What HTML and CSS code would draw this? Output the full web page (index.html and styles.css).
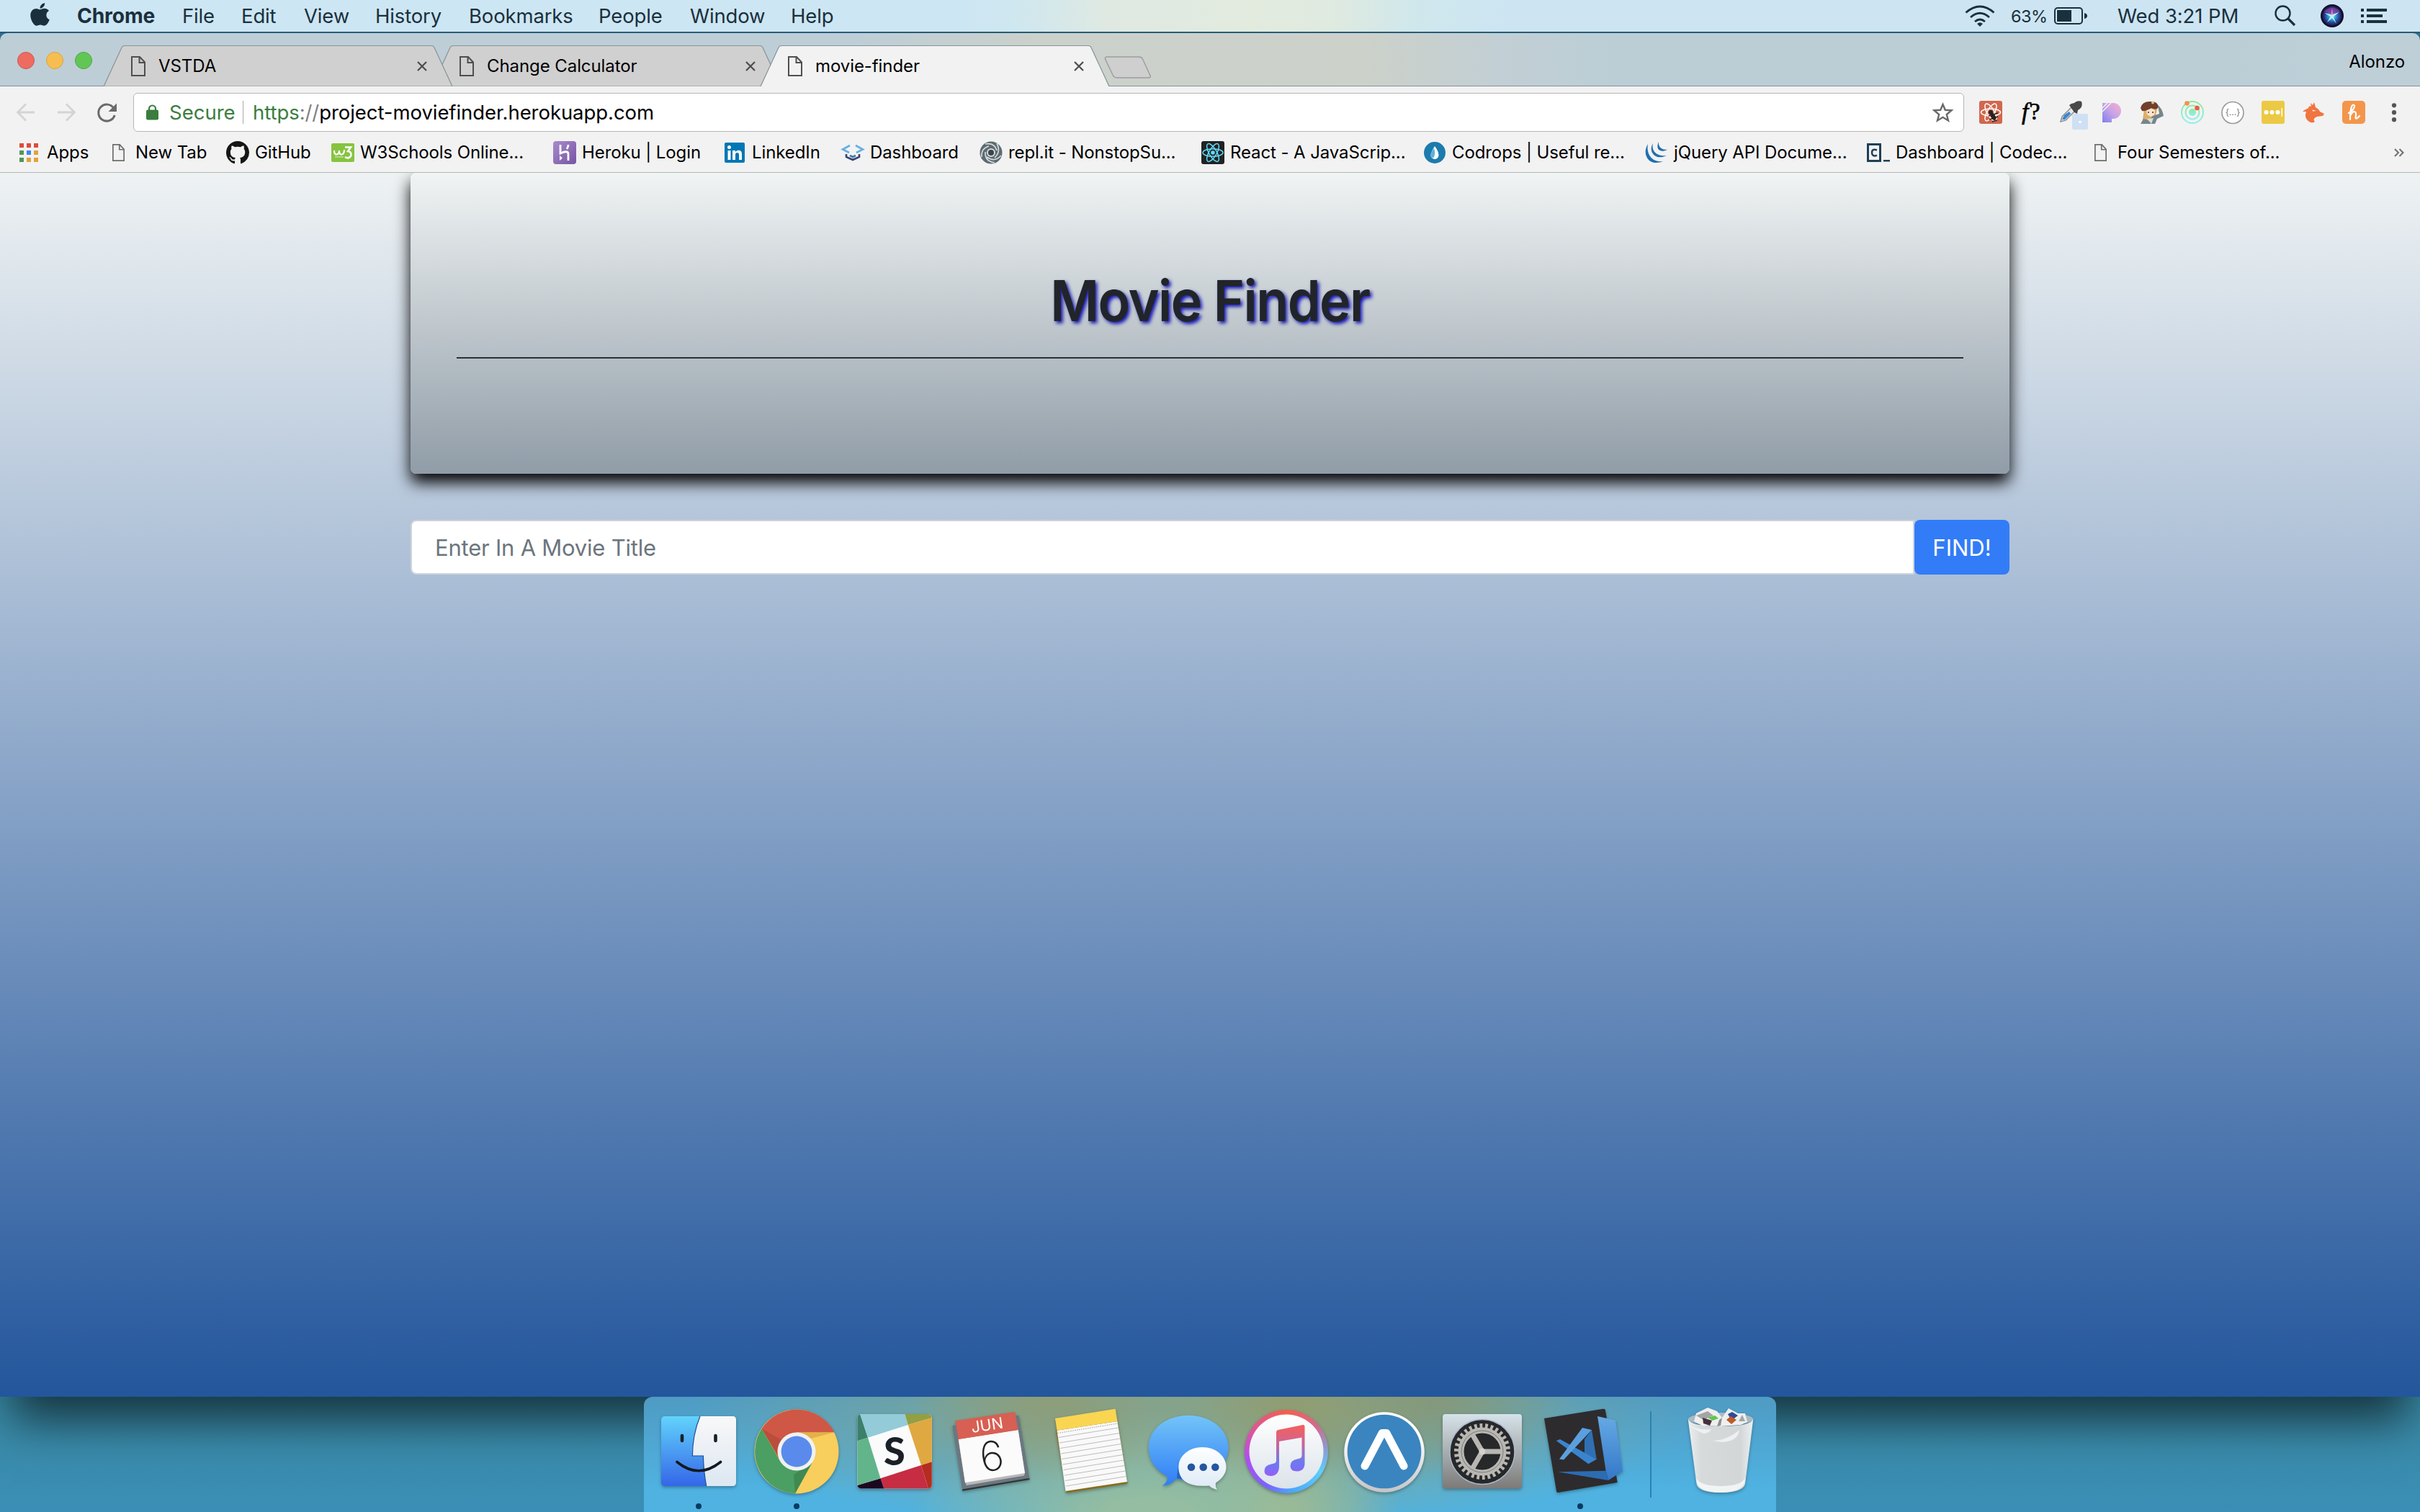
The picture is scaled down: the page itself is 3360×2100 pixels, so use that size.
FILE: index.html
```html
<!DOCTYPE html>
<html lang="en">
<head>
<meta charset="utf-8">
<title>movie-finder</title>
<link rel="stylesheet" href="styles.css">
</head>
<body>
<svg class="defs" width="0" height="0" aria-hidden="true">
  <defs>
    <symbol id="page" viewBox="0 0 20 28"><path d="M1 1H12L19 8.5V27H1Z M11.5 1V9H19" fill="none" stroke="currentColor" stroke-width="2"/></symbol>
    <symbol id="close" viewBox="0 0 14 14"><path d="M1 1L13 13M13 1L1 13" stroke="#4c4c4c" stroke-width="2.2"/></symbol>
    <symbol id="tab" viewBox="0 0 484 57"><path d="M0 57L25 3Q26 .5 29 .5H455Q458 .5 459 3L484 57Z"/></symbol>
  </defs>
</svg>

<header class="menubar">
  <nav class="menus">
    <svg class="apple" viewBox="0 28 384 456" preserveAspectRatio="none"><path fill="#1a303d" d="M318.7 268.7c-.2-36.7 16.4-64.4 50-84.8-18.8-26.9-47.2-41.7-84.7-44.6-35.5-2.8-74.3 20.7-88.5 20.7-15 0-49.4-19.7-76.4-19.7C63.3 141.2 4 184.8 4 273.5q0 39.3 14.4 81.2c12.8 36.7 59 126.7 107.2 125.2 25.2-.6 43-17.9 75.8-17.9 31.8 0 48.3 17.9 76.4 17.9 48.6-.7 90.4-82.5 102.6-119.3-65.2-30.7-61.7-90-61.7-91.9zm-56.6-164.2c27.3-32.4 24.8-61.9 24-72.5-24.1 1.4-52 16.4-67.9 34.9-17.5 19.8-27.8 44.3-25.6 71.9 26.1 2 49.9-11.4 69.5-34.3z"/></svg>
    <b class="t">Chrome</b><span class="t">File</span><span class="t">Edit</span><span class="t">View</span><span class="t">History</span><span class="t">Bookmarks</span><span class="t">People</span><span class="t">Window</span><span class="t">Help</span>
  </nav>
  <div class="status">
    <svg width="42" height="30" viewBox="0 0 42 30" fill="none" stroke="#1a303d" stroke-width="2.8"><path d="M1.5 10.5Q21-6.500 40.500 10.500M8 17Q21 5.500 34 17M14 23Q21 17 28 23"/><path d="M17 26Q21 22.500 25 26L21 30Z" fill="#1a303d" stroke="none"/></svg>
    <span class="t small">63%</span>
    <svg width="48" height="26" viewBox="0 0 48 26"><rect x="1" y="2" width="38" height="22" rx="4" fill="none" stroke="#1a303d" stroke-width="2"/><rect x="4" y="5" width="20" height="16" fill="#1a303d"/><path d="M42 9Q46 10 46 13T42 17Z" fill="#1a303d"/></svg>
    <span class="t">Wed 3:21 PM</span>
    <svg width="30" height="30" viewBox="0 0 30 30" fill="none" stroke="#1a303d"><circle cx="11.500" cy="11.500" r="10" stroke-width="2.400"/><path d="M18.500 18.500L28 28" stroke-width="3.200"/></svg>
    <svg width="32" height="32" viewBox="0 0 32 32"><defs><radialGradient id="siri"><stop offset="0" stop-color="#d8fbff"/><stop offset=".3" stop-color="#31b5d8"/><stop offset=".65" stop-color="#2a4ea6"/><stop offset="1" stop-color="#1b1236"/></radialGradient></defs><circle cx="16" cy="16" r="16" fill="#0d0f2b"/><circle cx="16" cy="16" r="14" fill="url(#siri)"/><path d="M5 10Q16-1 27 10L17 15Z" fill="#8a3a9c" opacity=".75"/><path d="M5 12L15 14.500L26 11L17.500 17L22 27L16 19L9 25L14 17Z" fill="#bff2fa"/><path d="M17 15L16 5L14.500 15Z" fill="#f08fd8"/></svg>
    <svg width="36" height="20" viewBox="0 0 36 20" fill="#1a303d"><path d="M0 0H4V4H0ZM8 0H36V4H8ZM0 8H4V12H0ZM8 8H30V12H8ZM0 16H4V20H0ZM8 16H36V20H8Z"/></svg>
  </div>
</header>

<main class="window">
  <div class="strip">
    <div class="lights"><i class="red"></i><i class="amber"></i><i class="green"></i></div>
    <div class="tabs">
      <div class="tab first"><svg class="shape"><use href="#tab"/></svg><svg class="doc"><use href="#page"/></svg><span class="t">VSTDA</span><svg class="x"><use href="#close"/></svg></div>
      <div class="tab"><svg class="shape"><use href="#tab"/></svg><svg class="doc"><use href="#page"/></svg><span class="t">Change Calculator</span><svg class="x"><use href="#close"/></svg></div>
      <div class="tab active"><svg class="shape"><use href="#tab"/></svg><svg class="doc"><use href="#page"/></svg><span class="t">movie-finder</span><svg class="x"><use href="#close"/></svg></div>
    </div>
    <svg class="newtab" viewBox="0 0 66 32"><path d="M4 1H48Q52 1 53.500 4L64 27Q65 30 62 30H18Q14 30 12.500 27L1.500 4Q1 1 4 1Z" fill="#cfcfcf" stroke="#9b9f9f" stroke-width="1.500"/></svg>
    <span class="profile t">Alonzo</span>
  </div>

  <div class="toolbar">
    <svg class="nav" width="26" height="26" viewBox="0 0 26 26"><path d="M25 13H2M13 1.500L1.500 13L13 24.500" fill="none" stroke="#d4d4d4" stroke-width="2.800"/></svg>
    <svg class="nav fwd" width="26" height="26" viewBox="0 0 26 26"><path d="M1 13H24M13 1.500L24.500 13L13 24.500" fill="none" stroke="#d4d4d4" stroke-width="2.800"/></svg>
    <svg class="nav reload" width="28" height="27" viewBox="0 0 28 27"><path d="M23 7.500A11.500 11.500 0 1 0 24.200 17" fill="none" stroke="#6a6a6a" stroke-width="3"/><path d="M27 .5V12H15.500Z" fill="#6a6a6a"/></svg>
    <div class="omnibox">
      <svg width="17" height="22" viewBox="0 0 17 22"><path d="M4 9V6a4.500 4.500 0 0 1 9 0V9" fill="none" stroke="#3a7d3e" stroke-width="2.200"/><rect y="7.500" width="17" height="14" rx="2" fill="#3a7d3e"/></svg>
      <span class="secure t">Secure</span><i class="rule"></i>
      <span class="url t"><span class="scheme">https</span><span class="slashes">://</span>project-moviefinder.herokuapp.com</span>
      <svg class="star" width="29" height="29" viewBox="0 0 29 29"><path d="M14.500 3L17.800 10.800L26.500 11.300L19.800 17L22 25.500L14.500 20.800L7 25.500L9.200 17L2.500 11.300L11.200 10.800Z" fill="none" stroke="#686868" stroke-width="2.400"/></svg>
    </div>
    <div class="extensions">
      <svg viewBox="0 0 32 32"><rect width="32" height="32" rx="3" fill="#d2674e"/><g fill="none" stroke="#fff" stroke-width="1.500"><ellipse cx="16" cy="16" rx="13.500" ry="5"/><ellipse cx="16" cy="16" rx="13.500" ry="5" transform="rotate(60 16 16)"/><ellipse cx="16" cy="16" rx="13.500" ry="5" transform="rotate(120 16 16)"/></g><g stroke="#2a211e" stroke-width="1.400"><circle cx="16" cy="16" r="2.300" fill="#2a211e"/><ellipse cx="19.500" cy="22" rx="2.400" ry="4.500" transform="rotate(-30 19.500 22)" fill="#2a211e"/><path d="M13 21L26 17M14 26L26 22M18 29L25 27"/></g></svg>
      <span class="fx"><i>f</i>?</span>
      <svg class="picker" viewBox="0 0 40 40"><path d="M1 29L3 22L16 9L21 14L8 27Z" fill="#e4e8ec" stroke="#8d9094" stroke-width="1.500"/><path d="M3 26L6 20L13 15L15 18L7 26Z" fill="#3d86cf"/><path d="M13 6L16 4L20 3Q24-1 30 1Q32 7 28 11L25 13L24 18L20 16Z" fill="#484848"/><rect x="17" y="18" width="22" height="22" rx="2" fill="#cfe0f5"/><circle cx="28" cy="29.500" r="1.800" fill="#fff"/></svg>
      <svg viewBox="0 0 32 32"><defs><linearGradient id="pg" x1="1" y1="0" x2="0" y2="1"><stop offset="0" stop-color="#f9aed0"/><stop offset=".5" stop-color="#c6a3e6"/><stop offset="1" stop-color="#7c80ee"/></linearGradient></defs><path d="M3 3H18A11 11 0 0 1 18 25H16V30H3Z" fill="url(#pg)"/><path d="M3 10L10 3M3 15L15 3" stroke="#f2f2f2" stroke-width="1.500"/></svg>
      <svg viewBox="0 0 32 32"><path d="M5 12L3 26L10 30L20 24L24 8Z" fill="#dcae68"/><path d="M8 13Q15 9 20 13L19 20L14 22L9 19Z" fill="#fbe3cc"/><path d="M10 16H12M16 16H18" stroke="#3d3026" stroke-width="1.500"/><path d="M0 10Q2 1 13 1Q24 0 25 9Q21 14 15 10Q7 15 2 14Z" fill="#71402c"/><circle cx="17" cy="2.500" r="2" fill="#d9c191"/><path d="M24 6Q30 10 32 21L23 25L20 32H0L4 25L12 27L17 21L26 18Z" fill="#76858a"/><path d="M9 25L15 32L18 24Z" fill="#d9dddd"/></svg>
      <svg viewBox="0 0 32 32"><defs><linearGradient id="rg" x1="0" y1="0" x2="0" y2="1"><stop offset="0" stop-color="#8beb9f"/><stop offset="1" stop-color="#93efe9"/></linearGradient></defs><g fill="none" stroke="url(#rg)" stroke-width="2"><circle cx="16" cy="16" r="15"/><circle cx="16" cy="16" r="9.500"/></g><circle cx="16" cy="16" r="5" fill="url(#rg)"/><circle cx="8.500" cy="3.500" r="3.300" fill="#f0934b"/><circle cx="22.500" cy="10" r="3.300" fill="#e4603f"/></svg>
      <svg viewBox="0 0 32 32"><circle cx="16" cy="16.500" r="15" fill="#fff" stroke="#999" stroke-width="1.600"/><text x="16" y="20" text-anchor="middle" font-family="Inter" font-size="12" fill="#777">{...}</text></svg>
      <svg viewBox="0 0 32 32"><rect width="32" height="32" rx="3" fill="#ecc944"/><g fill="#fff"><circle cx="6.500" cy="16" r="3"/><circle cx="14.500" cy="16" r="3"/><circle cx="22.500" cy="16" r="3"/><path d="M27.500 10H29V22H27.500Z"/></g></svg>
      <svg viewBox="0 0 32 32"><path d="M1 15Q3 13 9 10Q10 6 13 8L12 3L15 6L17 2L19 9Q24 12 25 15L31 18L29 21L21 22Q14 25 18 29Q16 31 12 30Q4 26 5 19L6 15Z" fill="#f0753f"/><path d="M14.500 12.500L20 14L15 14.500Z" fill="#fff"/></svg>
      <svg viewBox="0 0 32 32"><rect width="32" height="32" rx="5" fill="#f3964b"/><path d="M9 17Q17 12 17 7Q16 4 13.500 7Q11 12 11 26M11 21Q15 13 18 15.500Q20 18 18.500 23Q19 27 24 21" fill="none" stroke="#fff" stroke-width="2.200" stroke-linecap="round"/></svg>
      <svg viewBox="0 0 32 32" fill="#555"><circle cx="16" cy="6.300" r="3.100"/><circle cx="16" cy="16.200" r="3.100"/><circle cx="16" cy="26.200" r="3.100"/></svg>
    </div>
  </div>

  <nav class="bookmarks">
    <a class="apps"><svg viewBox="0 0 26 26"><path d="M0 0H6V6H0ZM10 0H16V6H10ZM20 0H26V6H20Z" fill="#e04a3c"/><path d="M0 10H6V16H0ZM0 20H6V26H0Z" fill="#519657"/><path d="M10 10H16V16H10Z" fill="#4285f0"/><path d="M20 10H26V16H20ZM10 20H16V26H10ZM20 20H26V26H20Z" fill="#e3a239"/></svg><span class="t">Apps</span></a>
    <a><svg class="leaf"><use href="#page"/></svg><span class="t">New Tab</span></a>
    <a><svg viewBox="0 0 16 16"><path fill="#161616" d="M8 0C3.580 0 0 3.580 0 8c0 3.540 2.290 6.530 5.470 7.590.4.070.55-.17.55-.38 0-.19-.01-.82-.01-1.490-2.010.37-2.530-.49-2.690-.94-.09-.23-.48-.94-.82-1.130-.28-.15-.68-.52-.01-.53.63-.01 1.080.58 1.230.82.72 1.210 1.870.87 2.330.66.07-.52.28-.87.51-1.070-1.780-.2-3.640-.89-3.640-3.950 0-.87.31-1.590.82-2.150-.08-.2-.36-1.020.08-2.120 0 0 .67-.21 2.200.82.64-.18 1.320-.27 2-.27s1.360.09 2 .27c1.530-1.040 2.200-.82 2.200-.82.44 1.100.16 1.920.08 2.120.51.56.82 1.270.82 2.150 0 3.070-1.870 3.750-3.650 3.950.29.25.54.73.54 1.480 0 1.070-.01 1.930-.01 2.200 0 .21.15.46.55.38A8.010 8.010 0 0016 8c0-4.420-3.580-8-8-8z"/></svg><span class="t">GitHub</span></a>
    <a><svg viewBox="0 0 32 32"><rect y="3" width="32" height="26" rx="2" fill="#86c440"/><path d="M4 13Q4 19 7.500 18.500Q11 18 11 13Q11 19 14.500 18.500Q18 18 18 12" fill="none" stroke="#fff" stroke-width="2.200"/><path d="M19 8.500H27L23 14Q29 15 27 21Q24 25 19 22" fill="none" stroke="#fff" stroke-width="2.600"/><path d="M5 22H17" stroke="#d5edbb" stroke-width="1.600" stroke-dasharray="1.500 .5"/></svg><span class="t">W3Schools Online...</span></a>
    <a><svg viewBox="0 0 32 32"><defs><linearGradient id="hk" x2="1" y2="1"><stop stop-color="#a98bcc"/><stop offset="1" stop-color="#7654a3"/></linearGradient></defs><rect width="32" height="32" rx="4" fill="url(#hk)"/><path d="M10 5V17Q21 12 21 18V27M21 5Q21 8 19 11" fill="none" stroke="#fff" stroke-width="2.800"/><path d="M9 20L13 23.500L9 27Z" fill="#fff"/></svg><span class="t">Heroku | Login</span></a>
    <a><svg viewBox="0 0 32 32"><rect x="2" y="2" width="28" height="28" rx="2" fill="#0077b5"/><g fill="#fff"><circle cx="8.500" cy="8.500" r="2.500"/><path d="M6.500 13H10.500V26H6.500ZM13 13H17V15Q19 12.500 22 12.800Q26 13 26 18V26H22V19Q22 16 19.500 16Q17 16 17 19V26H13Z"/></g></svg><span class="t">LinkedIn</span></a>
    <a><svg viewBox="0 0 32 32" fill="none" stroke-width="2.600"><path d="M12 6L2 11.500L11 16M20 6L30 11.500L21 16" stroke="#65aee4"/><path d="M7 18V22L16 26L25 22V18" stroke="#36446b"/><path d="M12 20L16 22L20 20" stroke="#3b78b5"/></svg><span class="t">Dashboard</span></a>
    <a><svg viewBox="0 0 32 32"><circle cx="16" cy="16" r="15.500" fill="#5d6b71"/><g fill="none" stroke="#d4dadd" stroke-width="1.700"><path d="M8 4Q21 2 24 13M24 3Q30 15 21 23M30 20Q21 30 10 22M21 30Q7 28 8 15M3 22Q2 10 13 7"/></g><circle cx="16" cy="16" r="6" fill="#d4dadd"/><circle cx="16" cy="16" r="4" fill="#3c4549"/></svg><span class="t">repl.it - NonstopSu...</span></a>
    <a><svg viewBox="0 0 32 32"><rect width="32" height="32" rx="3" fill="#222"/><g fill="none" stroke="#61dafb" stroke-width="1.500"><ellipse cx="16" cy="16" rx="14" ry="5.300"/><ellipse cx="16" cy="16" rx="14" ry="5.300" transform="rotate(60 16 16)"/><ellipse cx="16" cy="16" rx="14" ry="5.300" transform="rotate(120 16 16)"/></g><circle cx="16" cy="16" r="2.800" fill="#61dafb"/></svg><span class="t">React - A JavaScrip...</span></a>
    <a><svg viewBox="0 0 32 32"><circle cx="16" cy="16" r="15" fill="#1c7bad"/><path d="M16 7Q22 15 21.500 20A5.500 5.500 0 0 1 10.500 19Q11 15 16 7Z" fill="#fff"/><path d="M15 10Q18 18 14 23.500Q9 22 10.500 18Q11 15 15 10Z" fill="#5fb0da"/></svg><span class="t">Codrops | Useful re...</span></a>
    <a><svg viewBox="0 0 32 32" fill="#1f6fb0"><path d="M4 4C-5 18 5 36 25 28C12 30 1 20 4 4Z"/><path d="M11 3C4 14 14 28 30 20C19 22 8 15 11 3Z"/><path d="M19 1C14 11 21 17 31 12C24 12 18 9 19 1Z"/></svg><span class="t">jQuery API Docume...</span></a>
    <a><svg viewBox="0 0 32 32"><rect x="1.500" y="4.500" width="17" height="23" fill="none" stroke="#204056" stroke-width="3"/><path d="M14 12.500Q7 10 7 16T14 19.800" fill="none" stroke="#204056" stroke-width="2.500"/><path d="M23 26H32V28.500H23Z" fill="#204056"/></svg><span class="t">Dashboard | Codec...</span></a>
    <a><svg class="leaf"><use href="#page"/></svg><span class="t">Four Semesters of...</span></a>
    <svg class="more" width="14" height="12" viewBox="0 0 14 12"><path d="M1 1L6 6L1 11M7.500 1L12.500 6L7.500 11" fill="none" stroke="#6e6e6e" stroke-width="2"/></svg>
  </nav>

  <section class="page">
    <div class="jumbotron">
      <h1><span class="t">Movie Finder</span></h1>
      <hr>
    </div>
    <form class="search">
      <div class="field"><span class="t">Enter In A Movie Title</span></div>
      <button type="button"><span class="t">FIND!</span></button>
    </form>
  </section>
</main>

<footer class="desktop">
  <div class="dock">
    <div class="app on"><svg viewBox="0 0 128 128"><defs><linearGradient id="fb" x2="0" y2="1"><stop stop-color="#62d3fb"/><stop offset="1" stop-color="#3466e8"/></linearGradient><linearGradient id="fw" x2="0" y2="1"><stop stop-color="#f8f8f8"/><stop offset="1" stop-color="#dce7f2"/></linearGradient></defs><rect x="12" y="15" width="104" height="97" rx="5" fill="url(#fb)"/><path d="M66 15C59 32 55.500 50 55.400 70H70.400Q71 92 74.700 112H111Q116 112 116 107V20Q116 15 111 15Z" fill="url(#fw)"/><path d="M66 15C59 32 55.500 50 55.400 70H70.400Q71 92 74.700 112" fill="none" stroke="#1b4f96" stroke-width="1.200"/><path d="M41 42V49M87.500 42V49" stroke="#14212b" stroke-width="4.600" stroke-linecap="round"/><path d="M34 78.500Q64 103 94.500 78.500" fill="none" stroke="#14181f" stroke-width="3.600" stroke-linecap="round"/></svg></div>
    <div class="app on"><svg viewBox="0 0 128 128"><circle cx="64" cy="64" r="58.500" fill="#f8ce5c"/><path d="M15.500 32.300A58.500 58.500 0 0 1 116.600 37.300H64L40 74Z" fill="#cf5746"/><path d="M15.500 32.300A58.500 58.500 0 0 0 62 122.400L86 79L64 90L41 77Z" fill="#4b9f62"/><path d="M64 37.300H116.600L80 47Z" fill="#c98f35" opacity=".45"/><path d="M85 80L62 122L60 96Z" fill="#2c6a3d" opacity=".4"/><path d="M15.500 32.300L41 77L44 48Z" fill="#8f382b" opacity=".3"/><circle cx="64" cy="64" r="26.500" fill="#f1f1f1"/><circle cx="64" cy="64" r="21.400" fill="#5a8bec"/></svg></div>
    <div class="app"><svg viewBox="0 0 128 128"><defs><clipPath id="sk"><rect x="12.400" y="12" width="103.400" height="103.500" rx="5"/></clipPath></defs><g clip-path="url(#sk)"><rect width="128" height="128" fill="#fbfbfc"/><path d="M12 12H16.300L27 44.700L12 49.500Z" fill="#3c7f6a"/><path d="M16 12H78.300L82.700 27L27 44.700Z" fill="#94cbd8"/><path d="M78.300 12H116V17.300L82.700 27Z" fill="#92a043"/><path d="M82.700 27L116 17.300V78.300L101 83Z" fill="#e0a840"/><path d="M101 83L116 78.300V116H111Z" fill="#b42d1e"/><path d="M44.500 101.300L101 83L111 116H49.500Z" fill="#c62d42"/><path d="M12 111L44.500 101.300L49.500 116H12Z" fill="#1c0720"/><path d="M12 49.500L27 44.700L44.500 101.300L12 111Z" fill="#62b48b"/></g><text x="64" y="83" text-anchor="middle" font-family="Lato" font-weight="900" font-size="54" fill="#1b1f26">S</text></svg></div>
    <div class="app"><svg viewBox="0 0 128 128"><path d="M8.500 28L100.600 13.700L115.600 103L22.400 118.700Z" fill="#6b7781"/><path d="M22.400 118.700L115.600 103L115 101L22 116.500Z" fill="#333"/><path d="M16.700 47L99.600 34L109 94L108 97.500L28 111L26 107Z" fill="#b8b8b8"/><path d="M16.700 47L99.600 34L109 94L26 107.300Z" fill="#fbfbfb"/><path d="M12.400 21.300L95 9L99.600 34L16.700 47Z" fill="#d85f53"/><g transform="rotate(-8.500 60 50)" text-anchor="middle" font-family="Inter" fill="#fff"><text x="60" y="34.500" font-size="21.500">JUN</text><text x="60" y="91" font-size="57" font-weight="200" fill="#222">6</text></g></svg></div>
    <div class="app"><svg viewBox="0 0 128 128"><path d="M16 34L101.500 21L115.500 108.500L30.500 121.500Z" fill="#8a6c1c"/><path d="M17.500 34.700L101.400 22L115 106L29.500 119Z" fill="#f9f9f9"/><path d="M15 18L98.600 4.700L101.400 22L17.500 34.700Z" fill="#f9d552"/><path d="M18.500 38.500L102 25" stroke="#999" stroke-dasharray="1.500 1.500"/><g stroke="#bcbcbc"><path d="M19.400 44.500L103 31M20.700 52L104.200 38.500M21.900 59.500L105.400 46M23.100 67L106.600 53.500M24.300 74.500L107.800 61M25.500 82L109 68.500M26.700 89.500L110.200 76M27.900 97L111.400 83.500M29 104.500L112.600 91M30 112L113.800 98.500"/></g></svg></div>
    <div class="app"><svg viewBox="0 0 128 128"><defs><linearGradient id="mb" x2="0" y2="1"><stop stop-color="#73c4f8"/><stop offset="1" stop-color="#2f7df6"/></linearGradient><linearGradient id="mw" x2="0" y2="1"><stop stop-color="#fff"/><stop offset="1" stop-color="#dce9f5"/></linearGradient></defs><path d="M64 13.700C95 13.700 119.500 33 119.500 58.500S95 104 64 104Q55 104 47 102Q39 111 28 112Q35 107 35 99Q8.600 84 8.600 58.500C8.600 33 33 13.700 64 13.700Z" fill="url(#mb)"/><path d="M50 75Q46 90 58 103L48 101Z" fill="#173f8c" opacity=".5"/><path d="M83.500 58C102 58 116.500 70 116.500 85.500Q116.500 98 102 107.500Q101 113 104 117Q96 115 93 111.500Q50.400 115 50.400 85.500C50.400 70 65 58 83.500 58Z" fill="url(#mw)"/><g fill="#25569f"><circle cx="68" cy="85.700" r="5.300"/><circle cx="84.700" cy="85.700" r="5.300"/><circle cx="101.300" cy="85.700" r="5.300"/></g></svg></div>
    <div class="app"><svg viewBox="0 0 128 128"><defs><linearGradient id="n" gradientUnits="userSpaceOnUse" x1="0" y1="30" x2="0" y2="100"><stop stop-color="#f2605f"/><stop offset=".3" stop-color="#cf6590"/><stop offset=".7" stop-color="#6a7bf0"/><stop offset="1" stop-color="#9a5af8"/></linearGradient><linearGradient id="iw" x2="0" y2="1"><stop stop-color="#fff"/><stop offset="1" stop-color="#dbe3ea"/></linearGradient></defs><foreignObject x="6" y="6" width="116" height="116"><div class="ring"></div></foreignObject><circle cx="64" cy="64" r="51.500" fill="url(#iw)"/><path d="M50 37Q50 34.500 52.500 34L87 27Q89.500 26.500 89.500 29.500V80Q89.500 91 79 91.500Q69.500 91.500 69.500 84Q69.500 76 79 74.500Q85.500 73.500 85.500 70V44.500L54 50V84Q54 97.500 42.500 98Q33.500 98 33.500 91Q33.500 83 43 81.500Q50 80.500 50 77Z" fill="url(#n)"/></svg></div>
    <div class="app"><svg viewBox="0 0 128 128"><defs><linearGradient id="aw" x2="0" y2="1"><stop offset=".3" stop-color="#fff"/><stop offset="1" stop-color="#c4c4c4"/></linearGradient></defs><circle cx="64" cy="65" r="55.800" fill="url(#aw)"/><circle cx="64" cy="64" r="51.300" fill="#3a85bf"/><path d="M37 84L61 38.500H67L91 84" fill="none" stroke="#fff" stroke-width="11" stroke-linecap="round" stroke-linejoin="round"/></svg></div>
    <div class="app"><svg viewBox="0 0 128 128"><defs><linearGradient id="sg" x2="0" y2="1"><stop stop-color="#d6e3ea"/><stop offset="1" stop-color="#7c7a78"/></linearGradient></defs><rect x="9" y="12" width="110" height="103.500" rx="4" fill="url(#sg)"/><circle cx="64" cy="64.500" r="45" fill="#27282a" stroke="#a9b9cb" stroke-width="1.500"/><g fill="none" stroke="#b9b7b3"><circle cx="64" cy="64" r="36" stroke-width="6" stroke-dasharray="3.800 3.740"/><circle cx="64" cy="64" r="29.500" stroke-width="8"/><path d="M64 64H92M64 64L50 39.800M64 64L50 88.200" stroke-width="7"/></g><circle cx="64" cy="64" r="29" fill="none" stroke="#7c7b78"/><circle cx="64" cy="64" r="4.500" fill="#d3d1ce"/></svg></div>
    <div class="app on"><svg viewBox="0 0 128 128"><defs><linearGradient id="vb" x2="0" y2="1"><stop stop-color="#65a9e4"/><stop offset="1" stop-color="#3477c8"/></linearGradient></defs><path d="M14 18L96 4.700Q98.500 4.500 99 7L115.700 107L33 121Q31.500 121 31 119Z" fill="#2d2b2d"/><path d="M80 34L86.800 74.700L70 66V47Z" fill="#2f70b4"/><path d="M30.700 49L36 47L86.800 74.700L75.400 81.300Z" fill="#3a84cf"/><path d="M67 31L80 34L41 75.500L35 74.500Z" fill="#5ba0de"/><path d="M88 15L113 20.700L123 91.300L103 104L99.600 90.700Z" fill="url(#vb)"/><path d="M32.500 92.300L99.600 90.700L103 104Z" fill="#2c6cb2"/></svg></div>
    <i class="divider"></i>
    <div class="app"><svg viewBox="0 0 128 128"><defs><linearGradient id="tr" x2="1" y2="0"><stop stop-color="#f4f5f5"/><stop offset=".2" stop-color="#dedede"/><stop offset=".8" stop-color="#dadada"/><stop offset="1" stop-color="#f5f5f5"/></linearGradient></defs><ellipse cx="64" cy="19" rx="45" ry="9" fill="#a9bac4"/><path d="M18.600 18Q21 29 64 29T109.400 18L98 109Q95 121 64 121T30.500 109Z" fill="url(#tr)" opacity=".96"/><path d="M27 22L30 11L46 3L59 8L66 17L75 4L88 11L98 11L101 23L92 27L64 29L38 28Z" fill="#efefef"/><path d="M30 14L46 8L54 14L40 20ZM94 13L98 22L89 22Z" fill="#a3a5a6"/><path d="M39 17L52 21L49 28L40 25Z" fill="#453238"/><path d="M46 17L56 14L61 18L53 21Z" fill="#5ec64e"/><path d="M74 12L80 9L88 14L79 21Z" fill="#2f4b92"/><path d="M72 20L78 15L86 20L79 26Z" fill="#bd5b2b"/><path d="M62 20L66 17L64 28L59 29Z" fill="#8d8f92"/><path d="M22 29Q38 35 52 33Q42 43 34 36ZM52 49Q72 49 90 34Q88 50 66 51Z" fill="#fff" opacity=".6"/><path d="M30 101Q36 112 64 112T98 101Q98 121 64 121T30 101Z" fill="#fff" opacity=".7"/></svg></div>
  </div>
</footer>
</body>
</html>
```
FILE: styles.css
```css
* { box-sizing: border-box; }
body {
  margin: 0;
  width: 3360px;
  height: 2100px;
  overflow: hidden;
  display: flex;
  flex-direction: column;
  background: linear-gradient(#2f6f94 0 60px, #38889f 1900px, #3b8eb6);
  font-family: Inter, "Liberation Sans", sans-serif;
  font-size: 24px;
  color: #000;
}
svg { display: block; flex: none; overflow: visible; }
.defs { position: absolute; }
.t { white-space: nowrap; }

/* macOS menu bar */
.menubar {
  position: relative;
  z-index: 1;
  height: 46px;
  border-bottom: 2px solid #265c79;
  display: flex;
  justify-content: space-between;
  background: linear-gradient(90deg, #cde6f3 0 1340px, #cfe7ef 1410px, #dfe9e2 1540px, #e3ebdf 1740px, #dfeae0 1850px, #cfe7ec 1970px, #cde5f2 2090px);
  color: #1a303d;
  font-size: 27.5px;
}
.menus, .status { display: grid; align-items: center; }
.menus { padding-left: 42px; grid-template-columns: 65px 146px 82px 87px 99px 130px 180px 127px 140px 80px; letter-spacing: -.15px; }
.menus b { font-size: 28.2px; }
.status { grid-template-columns: 64px 60px 88px 218px 64px 56px 82px; letter-spacing: -.1px; }
.apple { width: 27px; height: 32px; margin-top: -4px; }
.small { font-size: 23.5px; letter-spacing: -.5px; }

/* Browser window */
.window {
  position: relative;
  height: 1894px;
  flex: none;
  border-radius: 10px 10px 0 0;
  box-shadow: 0 48px 60px -16px rgba(0, 0, 0, .62);
}
.strip {
  height: 74px;
  display: flex;
  border-bottom: 1px solid #82929b;
  border-radius: 10px 10px 0 0;
  background: linear-gradient(90deg, #bdced7 0 1180px, #cbd1cb 1440px, #ccd1ca 1900px, #c2cfd4 2080px, #bbced6 2240px 3100px, #bfcfd8);
}
.lights { display: flex; gap: 16px; padding: 26px 0 0 24px; width: 144px; }
.lights i { width: 24px; height: 24px; border-radius: 50%; border: 1px solid #d0584e; background: #ed6b60; }
.lights .amber { background: #f6be50; border-color: #d9a440; }
.lights .green { background: #62c655; border-color: #4fa743; }
.tabs { display: flex; padding-top: 17px; letter-spacing: -.08px; }
.tab { position: relative; flex: none; width: 484px; height: 57px; margin-right: -28px; display: flex; align-items: center; padding: 0 35px 0 38px; }
.tab > * { position: relative; }
.tab .shape { position: absolute; left: 0; top: 0; width: 484px; height: 57px; fill: #d0d0d0; stroke: #87939a; stroke-width: 1.2px; }
.tab.first { z-index: 1; }
.tab.active { z-index: 2; margin-right: 0; }
.tab.active .shape { fill: #f2f2f2; }
.tab.active::after { content: ""; position: absolute; left: 1px; right: 1px; bottom: -1px; height: 2px; background: #f2f2f2; }
.tab .doc { width: 20px; height: 28px; margin-right: 18px; color: #4f4f4f; }
.tab .x { width: 14px; height: 14px; margin-left: auto; }
.newtab { width: 66px; height: 32px; margin: 32px 0 0 -7px; }
.profile { margin: 25px 21px 0 auto; letter-spacing: -.1px; }

.toolbar { height: 64px; display: flex; padding: 9px 20px 0 23px; background: #f2f2f2; }
.nav { margin-top: 14px; }
.fwd { margin-left: 30px; }
.reload { margin-left: 30px; }
.omnibox { width: 2542px; height: 54px; margin-left: 22px; display: flex; align-items: center; padding: 0 14px 0 17px; border: 1px solid #b6b6b6; border-radius: 6px; background: #fff; font-size: 27.5px; }
.secure { width: 102px; margin-left: 15px; color: #3a7d3e; }
.rule { width: 1px; height: 32px; margin-right: 13px; background: #a9a9a9; }
.url { letter-spacing: -.06px; }
.scheme { color: #3a7d3e; }
.slashes { color: #808080; }
.star { margin-left: auto; }
.extensions { display: flex; gap: 24px; margin: 11px 0 0 21px; }
.extensions svg, .fx { width: 32px; height: 32px; flex: none; }
.extensions .picker { width: 40px; height: 40px; margin-right: -8px; }
.fx { font: 34px/30px "Liberation Serif", serif; letter-spacing: 1px; white-space: nowrap; padding-left: 3px; -webkit-text-stroke: .6px #000; }

.bookmarks { height: 56px; display: grid; grid-template-columns: 121px 166px 146px 308px 236px 164px 192px 308px 308px 308px 308px 308px 308px auto; padding: 0 22px 0 27px; align-items: center; background: #f2f2f2; border-bottom: 1px solid #b6b6b6; letter-spacing: -.1px; }
.bookmarks a { display: flex; align-items: center; gap: 8px; }
.bookmarks a svg { width: 32px; height: 32px; }
.bookmarks .apps { gap: 12px; }
.bookmarks .apps svg { width: 26px; height: 26px; }
.bookmarks a .leaf { width: 17px; height: 24px; margin: 0 7px 0 8px; color: #6e6e6e; }
.more { justify-self: end; }

/* Web page */
.page { height: 1700px; padding: 0 570px; overflow: hidden; background: linear-gradient(#eef2f3, #23569c); }
.jumbotron { height: 418px; padding: 128px 64px 0; border-radius: 8px; background: linear-gradient(#f0f4f4, #909ca7); box-shadow: 0 12px 22px #000; text-align: center; }
h1 { margin: 0; font-size: 79px; line-height: 98px; font-weight: 600; color: #212529; text-shadow: 3px 3px 5px #1414b4; letter-spacing: -1.6px; transform: scaleX(.93); }
hr { height: 2px; margin: 30px 0 0; border: 0; background: #2b3036; }
.search { display: flex; margin-top: 64px; font-size: 31px; }
.field { flex: 1; height: 76px; padding: 0 32px; border: 2px solid #ced4da; border-radius: 8px 0 0 8px; display: flex; align-items: center; background: #fff; color: #6c757d; letter-spacing: -.22px; }
button { width: 132px; height: 76px; padding: 0; border: 0; border-radius: 8px; background: #327cf7; color: #fff; font: inherit; }

/* Desktop and dock */
.desktop { position: relative; height: 160px; display: flex; justify-content: center; }
.dock {
  width: 1572px;
  height: 160px;
  padding: 12px 8px 0;
  display: flex;
  border-radius: 12px 12px 0 0;
  background:
    radial-gradient(ellipse 200px 130px at 570px -10px, #8d9d78 10%, transparent),
    radial-gradient(ellipse 200px 120px at 900px 0, #909d72 10%, transparent),
    radial-gradient(ellipse 200px 110px at 1090px 0, #84997c 10%, transparent),
    radial-gradient(ellipse 330px 150px at 700px 170px, #94bda1 20%, transparent),
    radial-gradient(ellipse 170px 110px at 880px 160px, #9fb78c 10%, transparent),
    radial-gradient(ellipse 700px 160px at 760px 30px, #80a695 30%, transparent),
    linear-gradient(#4f9bc3, #4fb2e1 80%);
}
.app { position: relative; width: 136px; padding-left: 4px; }
.app svg { width: 128px; height: 128px; filter: drop-shadow(0 2px 2px rgba(0, 0, 0, .3)); }
.app.on::after { content: ""; position: absolute; left: 64px; top: 136px; width: 8px; height: 8px; border-radius: 50%; background: #0a3a63; }
.ring { width: 116px; height: 116px; border-radius: 50%; background: conic-gradient(#f0604f, #d56a8c 50deg, #8d9ad0 85deg, #5fcdfa 120deg, #4aa9fb 170deg, #7a62fb 210deg, #b14df0 260deg, #dd559c 300deg, #f0604f); }
.divider { width: 2px; height: 120px; margin: 8px 28px 0 29px; background: #2b83b1; }
```
